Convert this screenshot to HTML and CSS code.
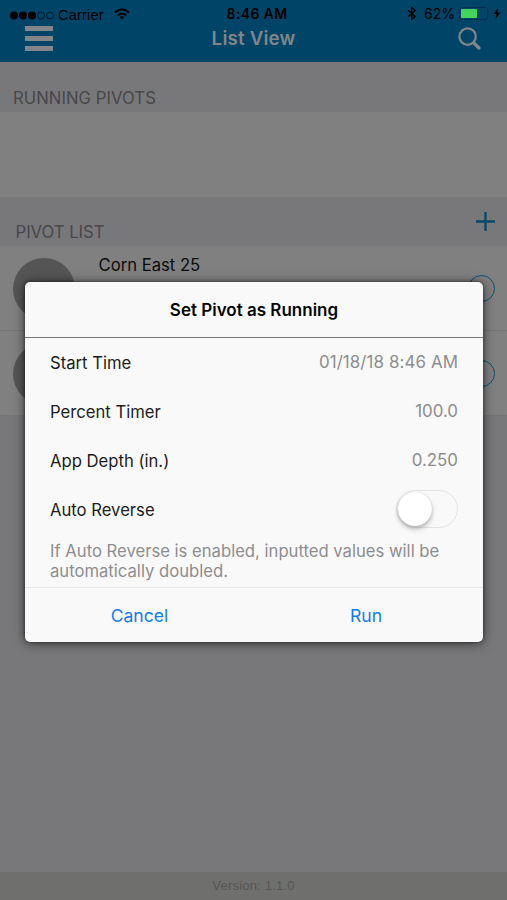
FILE: index.html
```html
<!DOCTYPE html>
<html lang="en">
<head>
<meta charset="utf-8">
<title>List View</title>
<link rel="stylesheet" href="styles.css">
</head>
<body>
<div class="app">
  <header class="topbar">
    <div class="status">
      <div class="status-left">
        <svg width="45" height="11" viewBox="0 0 45 11"><g><circle cx="4" cy="5.5" r="4"/><circle cx="13" cy="5.5" r="4"/><circle cx="22" cy="5.5" r="4"/></g><g fill="none" stroke="#001524" stroke-width=".9"><circle cx="31" cy="5.5" r="3.5"/><circle cx="40" cy="5.5" r="3.5"/></g></svg>
        <span class="carrier">Carrier</span>
        <svg class="wifi" width="16" height="12" viewBox="0 0 16 12"><g fill="none" stroke="#000" stroke-width="2"><path d="M1 4.6Q8-1.8 15 4.6"/><path d="M3.7 7.4Q8 3.6 12.3 7.4"/></g><path d="M5.6 9.1Q8 7.2 10.4 9.1L8 11.6Z"/></svg>
      </div>
      <span class="clock">8:46 AM</span>
      <div class="status-right">
        <svg width="10" height="15" viewBox="0 0 10 15"><path d="M1.2 4.2L8.2 10.5L4.8 13.6V1.2L8.2 4.4L1.2 10.7" fill="none" stroke="#000" stroke-width="1.3"/></svg>
        <span class="percent">62%</span>
        <svg width="31" height="13" viewBox="0 0 31 13"><rect x=".5" y=".5" width="28" height="12" rx="2.5" fill="none" stroke="#00304c"/><rect x="2" y="2" width="16" height="9" rx="1" fill="#42d45c"/><path d="M29.6 4.4Q30.8 6.5 29.6 8.6Z" fill="#00304c"/></svg>
        <svg class="bolt" width="8" height="11" viewBox="0 0 8 11"><path d="M5 0L.5 6.1H3.5L2.5 11L7.5 4.6H4.3Z"/></svg>
      </div>
    </div>
    <div class="nav">
      <svg width="28" height="25" viewBox="0 0 28 25" fill="#838688"><path d="M0 0h28v5H0zM0 10h28v5H0zM0 20h28v5H0z"/></svg>
      <h1 class="title">List View</h1>
      <svg width="23" height="23" viewBox="0 0 23 23" fill="none" stroke="#838688"><circle cx="9.6" cy="9.6" r="8.2" stroke-width="2.2"/><path d="M15.8 15.8L21 21" stroke-width="3.2" stroke-linecap="round"/></svg>
    </div>
  </header>
  <div class="section section-running"><span>RUNNING PIVOTS</span></div>
  <div class="empty"></div>
  <div class="section section-list">
    <span>PIVOT LIST</span>
    <svg class="add" width="19" height="19" viewBox="0 0 19 19"><path d="M9.5 0v19M0 9.5h19" stroke="#00486c" stroke-width="2.3"/></svg>
  </div>
  <div class="pivot"><i class="avatar"></i><span class="pivot-name">Corn East 25</span><i class="ring"></i></div>
  <div class="pivot"><i class="avatar"></i><span class="pivot-name"></span><i class="ring"></i></div>
  <footer class="footer">Version: 1.1.0</footer>
</div>
<div class="overlay">
  <section class="dialog">
    <h2 class="dialog-title">Set Pivot as Running</h2>
    <div class="fields">
      <div class="field"><span class="label">Start Time</span><span class="value date">01/18/18 8:46 AM</span></div>
      <div class="field"><span class="label">Percent Timer</span><span class="value">100.0</span></div>
      <div class="field"><span class="label">App Depth (in.)</span><span class="value">0.250</span></div>
      <div class="field"><span class="label">Auto Reverse</span><span class="switch"><i class="knob"></i></span></div>
    </div>
    <p class="note">If Auto Reverse is enabled, inputted values will be<br>automatically doubled.</p>
    <div class="actions"><span>Cancel</span><span class="run">Run</span></div>
  </section>
</div>
</body>
</html>
```
FILE: styles.css
```css
* { box-sizing: border-box; }
body { margin: 0; font-family: Inter, "Liberation Sans", sans-serif; font-size: 16.65px; color: #1c1c1c; }
svg { display: block; flex: none; }
.app { width: 507px; height: 900px; background: #78787a; display: flex; flex-direction: column; overflow: hidden; }
.topbar { height: 62px; background: #004468; flex: none; }
.status { height: 25px; padding: 4px 5px 0 10px; display: grid; grid-template-columns: 1fr auto 1fr; align-items: center; color: #000; }
.status-left { display: flex; align-items: center; padding-top: 1px; }
.carrier { font: 14.5px "Liberation Sans", sans-serif; margin-left: 3px; letter-spacing: .2px; }
.wifi { margin-left: 10px; margin-top: -2px; }
.clock { font-size: 14px; font-weight: 600; letter-spacing: .35px; margin: -2px -2px 0 0; }
.status-right { display: flex; align-items: center; justify-content: flex-end; margin-top: -2px; }
.percent { font-size: 14px; margin: 0 4px 0 7px; }
.bolt { margin-left: 3px; margin-right: 1px; }
.nav { display: flex; justify-content: space-between; align-items: center; padding: 0 26px 0 25px; height: 26px; }
.title { margin: 0 4px 0 0; font-size: 18.7px; font-weight: 600; letter-spacing: .2px; color: #838688; }
.section { background: #78787a; flex: none; display: flex; justify-content: space-between; align-items: flex-end; color: #47474a; line-height: 20px; }
.section-running { height: 50px; padding: 0 13px 4px; letter-spacing: .07px; }
.section-list { height: 49px; padding: 0 12px 4px 15.5px; }
.add { margin-bottom: 11px; }
.empty { height: 85px; background: #808080; flex: none; }
.pivot { height: 85px; background: #808080; border-bottom: 1px solid #767676; padding: 12px 12px 0 13px; display: flex; flex: none; color: #0c0c0c; }
.avatar { width: 62px; height: 62px; border-radius: 50%; background: #555; }
.pivot-name { flex: 1; margin-left: 23.5px; line-height: 20px; margin-top: -3px; }
.ring { width: 27px; height: 27px; border: 1.5px solid #00527c; border-radius: 50%; margin-top: 17px; }
.footer { margin-top: auto; height: 28px; background: #6f6f6d; color: #565656; font: 13px/28px "Liberation Sans", sans-serif; text-align: center; letter-spacing: .2px; }
.overlay { position: absolute; inset: 0; width: 507px; height: 900px; overflow: hidden; padding: 282px 24px 0 25px; }
.dialog { height: 360px; background: #f9f9f9; border-radius: 5px; box-shadow: 0 1px 12px rgba(0,0,0,.62), 0 0 3px rgba(0,0,0,.5); }
.dialog-title { margin: 0; height: 56px; border-bottom: 1px solid #777; font-size: 17px; line-height: 56px; font-weight: 600; text-align: center; color: #050505; }
.fields { height: 196px; padding: 0 25px; }
.field { height: 49px; padding-bottom: 2px; display: flex; align-items: center; justify-content: space-between; }
.label { padding-top: 2px; }
.value { color: #8d8d8f; font-size: 16.9px; padding-top: 1px; }
.date { letter-spacing: .1px; }
.switch { width: 62px; height: 38px; border: 1.5px solid #e4e4e4; border-radius: 19px; padding: 1px 0 0 1px; }
.knob { display: block; width: 34px; height: 34px; border-radius: 50%; background: #fff; box-shadow: 0 3px 5px rgba(0,0,0,.28), 0 0 1px rgba(0,0,0,.2); }
.note { margin: 0; height: 53px; padding: 7px 25px 0; line-height: 20px; color: #8d8d8f; white-space: nowrap; }
.actions { height: 55px; border-top: 1px solid #e6e6e8; display: grid; grid-template-columns: 1fr 1fr; color: #137cf0; font-size: 17.6px; text-align: center; line-height: 56px; }
.run { padding-right: 5px; }
```
